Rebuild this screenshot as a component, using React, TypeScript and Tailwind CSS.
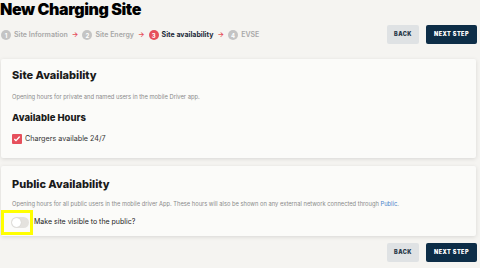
import React from "react";

const steps = [
  { n: 1, label: "Site Information", state: "done" },
  { n: 2, label: "Site Energy", state: "done" },
  { n: 3, label: "Site availability", state: "active" },
  { n: 4, label: "EVSE", state: "todo" },
];

const Stepper: React.FC = () => {
  return (
    <div className="flex items-center mt-[12px] ml-px">
      {steps.map((s, i) => (
        <div key={s.n} className="flex items-center">
          <div
            className={`w-[10px] h-[10px] rounded-full flex items-center justify-center text-white text-[6px] font-bold ${
              s.state === "active" ? "bg-[#e6505c]" : "bg-[#c4c4c4]"
            }`}
          >
            {s.n}
          </div>
          <span
            className={`ml-[3px] text-[7px] ${
              s.state === "active" ? "text-[#1d2b3a] font-bold" : "text-[#a8a8a8] font-semibold"
            }`}
          >
            {s.label}
          </span>
          {i < steps.length - 1 && (
            <span className="mx-[4px] text-[7px] text-[#e6505c] font-bold">→</span>
          )}
        </div>
      ))}
    </div>
  );
};

const Buttons: React.FC = () => {
  return (
    <div className="flex items-center gap-[7px]">
      <button className="w-[32px] h-[19px] rounded-[2px] bg-[#dfe2e4] text-[#2a3a4a] text-[5.5px] font-black tracking-[0.08em]">
        BACK
      </button>
      <button className="w-[51px] h-[19px] rounded-[2px] bg-[#0d2d47] text-white text-[5.5px] font-black tracking-[0.08em]">
        NEXT STEP
      </button>
    </div>
  );
};

const SiteAvailability: React.FC = () => {
  return (
    <section className="bg-[#fbfbf9] rounded-[2px] shadow-[0_1px_4px_rgba(0,0,0,0.12)] px-[11px] pt-[9px] h-[99px]">
      <h2 className="text-[11px] font-extrabold text-[#1a1a1a] leading-[15px]">Site Availability</h2>
      <p className="mt-[10px] text-[5.8px] text-[#8a8a8a] leading-[8px]">
        Opening hours for private and named users in the mobile Driver app.
      </p>
      <h3 className="mt-[10px] text-[9.5px] font-extrabold text-[#1a1a1a] leading-[13px]">Available Hours</h3>
      <div className="mt-[10px] flex items-center">
        <div className="w-[10px] h-[10px] rounded-[1px] bg-[#e6505c] flex items-center justify-center">
          <svg width="8" height="8" viewBox="0 0 24 24" fill="none" stroke="white" strokeWidth="4" strokeLinecap="round" strokeLinejoin="round">
            <path d="M5 13l4 4 10-11" />
          </svg>
        </div>
        <span className="ml-[3px] text-[7.2px] text-[#333]">Chargers available 24/7</span>
      </div>
    </section>
  );
};

const PublicAvailability: React.FC = () => {
  return (
    <section className="mt-[8px] bg-[#fbfbf9] rounded-[2px] shadow-[0_1px_4px_rgba(0,0,0,0.12)] px-[11px] pt-[11px] h-[70px]">
      <h2 className="text-[11px] font-extrabold text-[#1a1a1a] leading-[15px]">Public Availability</h2>
      <p className="mt-[8px] text-[5.75px] text-[#8a8a8a] leading-[8px]">
        Opening hours for all public users in the mobile driver App. These hours will also be shown on any external network connected through{" "}
        <span className="text-[#4a7fc9]">Public</span>.
      </p>
      <div className="mt-[2px] flex items-center -ml-[11px]">
        <div className="w-[32px] h-[25px] border-[3px] border-[#ffff00] flex items-center pl-[7px]">
          <div className="w-[18px] h-[11px] rounded-full bg-[#e4e2de] flex items-center pl-px">
            <div className="w-[9px] h-[9px] rounded-full bg-white shadow-[0_0_1px_rgba(0,0,0,0.2)]" />
          </div>
        </div>
        <span className="ml-px text-[7px] text-[#222]">Make site visible to the public?</span>
      </div>
    </section>
  );
};

const App: React.FC = () => {
  return (
    <div className="w-[480px] h-[268px] overflow-hidden bg-[#f5f4f1] font-['Inter',sans-serif]">
      <div className="flex justify-between pr-[3px]">
        <div>
          <h1 className="text-[16px] font-black text-black leading-[18px] tracking-tight">New Charging Site</h1>
          <Stepper />
        </div>
        <div className="pt-[25px]">
          <Buttons />
        </div>
      </div>
      <main className="mt-[15px] ml-px mr-[4px]">
        <SiteAvailability />
        <PublicAvailability />
      </main>
      <div className="flex justify-end mt-[7px] pr-[3px]">
        <Buttons />
      </div>
    </div>
  );
};

export default App;
